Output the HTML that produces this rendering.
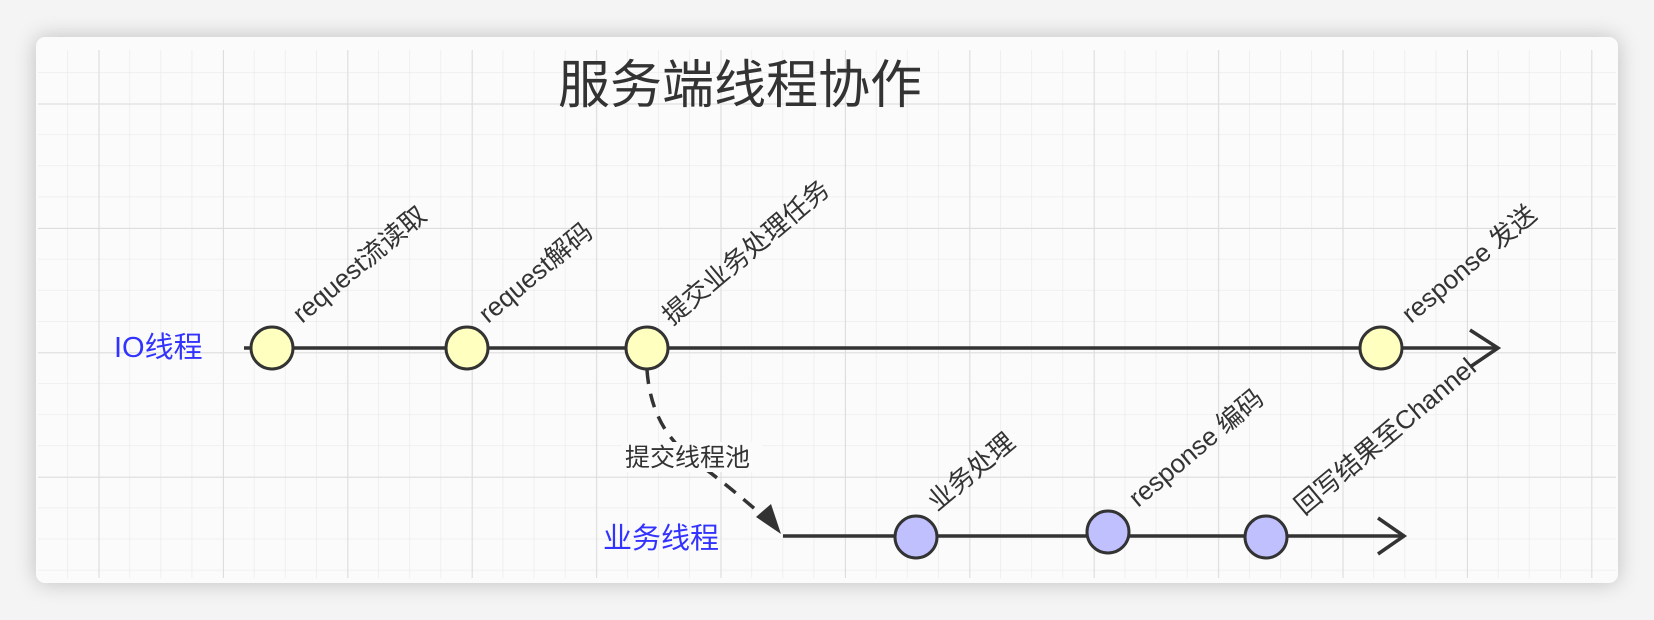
<!DOCTYPE html>
<html><head><meta charset="utf-8"><style>
html,body{margin:0;padding:0;background:#f4f4f4;width:1654px;height:620px;overflow:hidden}
.card{position:absolute;left:36px;top:37px;width:1582px;height:546px;border-radius:9px;background:#fbfbfb;box-shadow:0 0 22px rgba(0,0,0,0.22);overflow:hidden}
svg{position:absolute;left:0;top:0}
text{font-family:"Liberation Sans","Noto Sans CJK SC",sans-serif}
</style></head><body>
<div class="card"></div>
<svg width="1654" height="620" viewBox="0 0 1654 620">
<defs>
<pattern id="minor" x="5" y="10" width="31.1" height="31.1" patternUnits="userSpaceOnUse">
<path d="M0 0H31.1M0 0V31.1" stroke="#e9e9e9" stroke-width="1.3" fill="none"/>
</pattern>
<pattern id="major" x="98.6" y="103.6" width="124.4" height="124.4" patternUnits="userSpaceOnUse">
<path d="M0 0H124.4M0 0V124.4" stroke="#dedede" stroke-width="2" fill="none"/>
</pattern>
<clipPath id="c"><rect x="38" y="50" width="1578" height="528"/></clipPath>
</defs>
<g clip-path="url(#c)">
<rect x="0" y="0" width="1654" height="620" fill="url(#minor)"/>
<rect x="0" y="0" width="1654" height="620" fill="url(#major)"/>
</g>
<text x="558" y="103" font-size="52" fill="#333">服务端线程协作</text>
<text x="114" y="357" font-size="29" fill="#3333ff">IO线程</text>
<text x="603" y="548" font-size="29" fill="#3333ff">业务线程</text>
<g stroke="#333" stroke-width="3.5" fill="none">
<path d="M244 348H1498"/>
<path d="M1470 330L1498 348L1470 367"/>
<path d="M783 536H1404"/>
<path d="M1378 518L1404 536L1378 554"/>
<path d="M647 370C650 410 665 440 700 465C730 487 750 505 768 520" stroke-dasharray="14 10"/>
</g>
<path d="M781 534L756 517L771 504Z" fill="#333"/>
<rect x="622" y="442" width="140" height="30" fill="#fbfbfb"/>
<text x="625" y="466" font-size="25" fill="#333">提交线程池</text>
<g stroke="#333" stroke-width="3" fill="#ffffc0">
<circle cx="272" cy="348" r="21"/>
<circle cx="467" cy="348" r="21"/>
<circle cx="647" cy="348" r="21"/>
<circle cx="1381" cy="348" r="21"/>
</g>
<g stroke="#333" stroke-width="3" fill="#c0c0ff">
<circle cx="916" cy="537" r="21"/>
<circle cx="1108" cy="532" r="21"/>
<circle cx="1266" cy="537" r="21"/>
</g>
<g font-size="26" fill="#333">
<text transform="translate(302,324) rotate(-40)">request流读取</text>
<text transform="translate(488,324) rotate(-40)">request解码</text>
<text transform="translate(672,326) rotate(-40)">提交业务处理任务</text>
<text transform="translate(1411,324) rotate(-40)">response 发送</text>
<text transform="translate(937,512) rotate(-40)">业务处理</text>
<text transform="translate(1138,508) rotate(-40)">response 编码</text>
<text transform="translate(1304,516) rotate(-40)">回写结果至Channel</text>
</g>
</svg>
</body></html>
